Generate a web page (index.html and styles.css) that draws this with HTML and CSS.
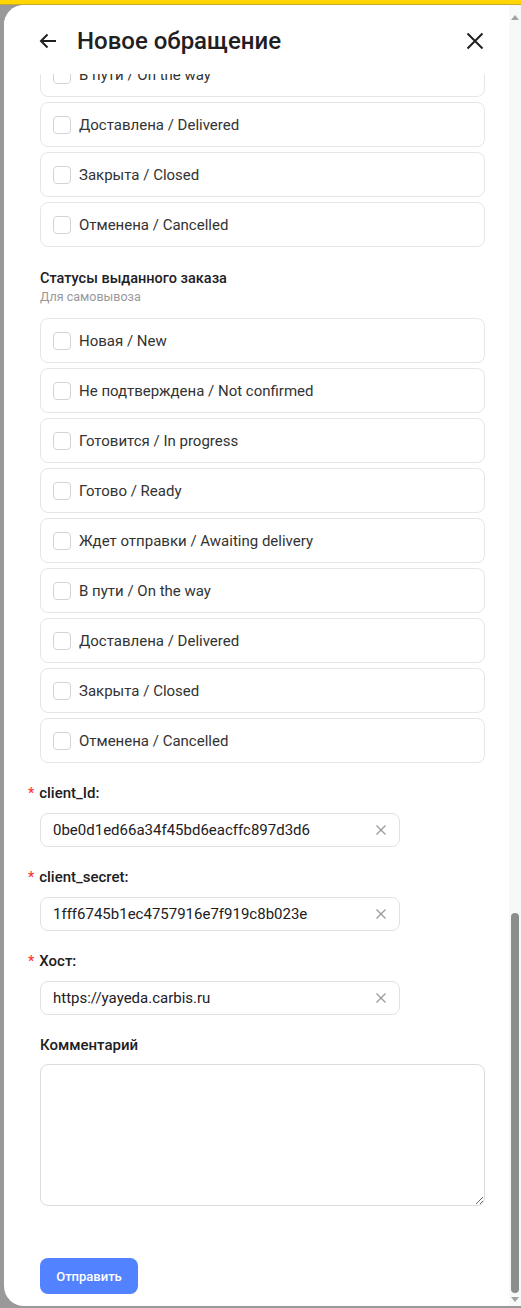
FILE: index.html
```html
<!DOCTYPE html>
<html>
<head>
<title>Новое обращение</title>
<link rel="stylesheet" href="styles.css">
</head>
<body>
<div class="topbar"></div>
<div class="stage">
<div class="panel">
<div class="panel-main">
<div class="header">
<svg class="icon" width="20" height="20" viewBox="0 0 20 20"><path d="M18 10H3M9.5 3.5L3 10l6.5 6.5" fill="none" stroke="#21201f" stroke-width="2"/></svg>
<h1 class="title">Новое обращение</h1>
<svg class="icon close" width="20" height="20" viewBox="0 0 20 20"><path d="M2.5 2.5l15 15M17.5 2.5l-15 15" fill="none" stroke="#21201f" stroke-width="2"/></svg>
</div>
<div class="body">
<div class="content">
<div class="list">
<label class="option"><span class="box"></span>В пути / On the way</label>
<label class="option"><span class="box"></span>Доставлена / Delivered</label>
<label class="option"><span class="box"></span>Закрыта / Closed</label>
<label class="option"><span class="box"></span>Отменена / Cancelled</label>
</div>

<div class="section-title">Статусы выданного заказа</div>
<div class="section-hint">Для самовывоза</div>
<div class="list">
<label class="option"><span class="box"></span>Новая / New</label>
<label class="option"><span class="box"></span>Не подтверждена / Not confirmed</label>
<label class="option"><span class="box"></span>Готовится / In progress</label>
<label class="option"><span class="box"></span>Готово / Ready</label>
<label class="option"><span class="box"></span>Ждет отправки / Awaiting delivery</label>
<label class="option"><span class="box"></span>В пути / On the way</label>
<label class="option"><span class="box"></span>Доставлена / Delivered</label>
<label class="option"><span class="box"></span>Закрыта / Closed</label>
<label class="option"><span class="box"></span>Отменена / Cancelled</label>
</div>

<div class="field">
<div class="field-label"><span class="req">*</span>client_Id:</div>
<div class="input"><span class="value">0be0d1ed66a34f45bd6eacffc897d3d6</span><svg width="12" height="12" viewBox="0 0 12 12"><path d="M1.5 1.5l9 9M10.5 1.5l-9 9" stroke="#9a9a9a" stroke-width="1.3"/></svg></div>
</div>
<div class="field">
<div class="field-label"><span class="req">*</span>client_secret:</div>
<div class="input"><span class="value">1fff6745b1ec4757916e7f919c8b023e</span><svg width="12" height="12" viewBox="0 0 12 12"><path d="M1.5 1.5l9 9M10.5 1.5l-9 9" stroke="#9a9a9a" stroke-width="1.3"/></svg></div>
</div>
<div class="field">
<div class="field-label"><span class="req">*</span>Хост:</div>
<div class="input"><span class="value">https://yayeda.carbis.ru</span><svg width="12" height="12" viewBox="0 0 12 12"><path d="M1.5 1.5l9 9M10.5 1.5l-9 9" stroke="#9a9a9a" stroke-width="1.3"/></svg></div>
</div>
<div class="field">
<div class="field-label">Комментарий</div>
<textarea class="comment"></textarea>
</div>

<button class="submit">Отправить</button>
</div>
</div>
</div>
<div class="scrollbar">
<span class="arrow up"></span>
<div class="track"><div class="thumb"></div></div>
<span class="arrow down"></span>
</div>
</div>
</div>
</body>
</html>
```

FILE: styles.css
```css
body {
margin: 0;
height: 1308px;
background-color: #999;
font-family: Roboto, "Noto Sans", sans-serif;
color: #21201f;
overflow: hidden;
display: flex;
flex-direction: column;
}
.topbar {
height: 4px;
background-color: #ffd600;
border-bottom: 1px solid #c9ab2a;
}
.stage {
display: flex;
padding-left: 4px;
height: 1301px;
}
.panel {
flex: 1;
display: flex;
background-color: #fff;
border-radius: 20px 0 0 20px;
overflow: hidden;
}
.panel-main {
flex: 1;
display: flex;
flex-direction: column;
min-width: 0;
}
.header {
flex-shrink: 0;
display: flex;
align-items: flex-start;
height: 69px;
padding: 22px 24px 0 34px;
box-sizing: border-box;
background-color: #fff;
}
.icon {
display: block;
margin-top: 4px;
}
.title {
margin: 0 0 0 19px;
flex: 1;
font-size: 24px;
font-weight: 500;
line-height: 28px;
}
.body {
flex: 1;
min-height: 0;
overflow: hidden;
}
.content {
margin-top: -22px;
padding: 0 24px 0 36px;
}
.list {
display: flex;
flex-direction: column;
gap: 5px;
}
.option {
display: flex;
align-items: center;
height: 45px;
box-sizing: border-box;
padding-left: 12px;
border: 1px solid #e6e6e6;
border-radius: 8px;
font-size: 15px;
color: #333;
}
.box {
width: 16px;
height: 16px;
border: 1px solid #d4d4d4;
border-radius: 4px;
margin-right: 8px;
}
.section-title {
margin-top: 22px;
font-size: 14.5px;
font-weight: 500;
line-height: 20px;
}
.section-hint {
font-size: 12.5px;
line-height: 16px;
color: #999;
margin-bottom: 13px;
}
.field {
margin-top: 20px;
}
.field-label {
font-size: 15px;
font-weight: 500;
line-height: 20px;
margin-bottom: 10px;
}
.req {
color: #f33;
margin-left: -12px;
margin-right: 5px;
font-size: 14px;
}
.input {
display: flex;
align-items: center;
width: 360px;
height: 34px;
box-sizing: border-box;
padding: 0 12px 0 12px;
border: 1px solid #e2e2e2;
border-radius: 8px;
font-size: 15px;
color: #21201f;
}
.value {
flex: 1;
}
.comment {
display: block;
width: 100%;
height: 142px;
box-sizing: border-box;
margin-top: -1px;
border: 1px solid #dcdcdc;
border-radius: 8px;
resize: vertical;
font-family: inherit;
}
.submit {
margin-top: 52px;
width: 98px;
height: 36px;
background-color: #5282ff;
color: #fff;
border: none;
border-radius: 8px;
font-family: inherit;
font-size: 13px;
font-weight: 500;
}
.scrollbar {
width: 12px;
display: flex;
flex-direction: column;
align-items: center;
background-color: #f8f8f8;
}
.arrow {
width: 0;
height: 0;
border-left: 4px solid transparent;
border-right: 4px solid transparent;
}
.up {
margin-top: 10px;
border-bottom: 5px solid #a3a3a3;
}
.down {
margin-bottom: 4px;
border-top: 5px solid #a3a3a3;
}
.track {
flex: 1;
width: 100%;
display: flex;
flex-direction: column;
justify-content: flex-end;
padding: 4px 0 4px;
box-sizing: border-box;
}
.thumb {
height: 380px;
margin: 0 2px;
background-color: #8c8c8c;
border-radius: 4px;
}
```
